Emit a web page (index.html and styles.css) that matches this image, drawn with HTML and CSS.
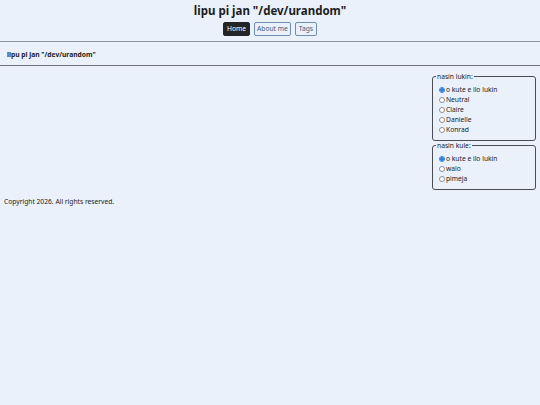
FILE: index.html
```html
<!DOCTYPE html>
<html lang="tok">
<head>
<meta charset="utf-8">
<title>lipu pi jan "/dev/urandom"</title>
<link rel="stylesheet" href="styles.css">
</head>
<body>
<header class="site-header">
  <h1 class="site-title">lipu pi jan "/dev/urandom"</h1>
  <nav class="nav">
    <a class="nav-btn active" href="#">Home</a>
    <a class="nav-btn" href="#">About me</a>
    <a class="nav-btn" href="#">Tags</a>
  </nav>
</header>
<section class="intro">
  <p class="intro-text">lipu pi jan "/dev/urandom"</p>
</section>
<main class="content">
  <aside class="settings">
    <fieldset class="group">
      <legend>nasin lukin:</legend>
      <label class="opt"><input type="radio" name="look" checked>o kute e ilo lukin</label>
      <label class="opt"><input type="radio" name="look">Neutral</label>
      <label class="opt"><input type="radio" name="look">Claire</label>
      <label class="opt"><input type="radio" name="look">Danielle</label>
      <label class="opt"><input type="radio" name="look">Konrad</label>
    </fieldset>
    <fieldset class="group">
      <legend>nasin kule:</legend>
      <label class="opt"><input type="radio" name="color" checked>o kute e ilo lukin</label>
      <label class="opt"><input type="radio" name="color">walo</label>
      <label class="opt"><input type="radio" name="color">pimeja</label>
    </fieldset>
  </aside>
</main>
<footer class="footer">Copyright 2026. All rights reserved.</footer>
</body>
</html>
```

FILE: styles.css
```css
html, body {
  margin: 0;
  padding: 0;
  background: #eaf1fb;
  color: #222222;
  font-family: "Noto Sans", "Open Sans", sans-serif;
  font-size: 6.7px;
}
.site-header {
  text-align: center;
  padding-top: 4px;
  padding-bottom: 5px;
  border-bottom: 1px solid #8e949b;
}
.site-title {
  margin: 0;
  font-size: 11.5px;
  font-weight: 700;
  line-height: 14px;
  color: #1c1c1c;
}
.nav {
  display: flex;
  justify-content: center;
  gap: 4px;
  margin-top: 4px;
}
.nav-btn {
  display: inline-block;
  padding: 2px 2.5px;
  font-size: 6.7px;
  line-height: 8px;
  text-decoration: none;
  color: #3f5d7f;
  border: 1px solid #6f8eb0;
  border-radius: 2px;
}
.nav-btn.active {
  background: #242528;
  color: #ffffff;
  border-color: #242528;
}
.intro {
  border-bottom: 1px solid #6e7379;
  padding: 8px 7px 5px;
}
.intro-text {
  margin: 0;
  font-weight: 700;
  font-size: 6.7px;
  line-height: 10px;
}
.content {
  display: flow-root;
  padding: 6px 4px 0 4px;
}
.settings {
  float: right;
  width: 104px;
  display: flex;
  flex-direction: column;
  gap: 0;
}
.group {
  margin: 0;
  padding: 4px 4px 5px 5px;
  border: 1px solid #4a4d52;
  border-radius: 3px;
  display: flex;
  flex-direction: column;
}
.group legend {
  padding: 0 1px;
  margin-left: -2px;
  font-size: 6.7px;
  line-height: 9px;
}
.opt {
  display: flex;
  align-items: center;
  gap: 1px;
  line-height: 10px;
  font-size: 6.7px;
}
.opt input {
  -webkit-appearance: none;
  appearance: none;
  margin: 0 0 0 1px;
  width: 6px;
  height: 6px;
  box-sizing: border-box;
  border: 1px solid #8b8f94;
  border-radius: 50%;
  background: #ffffff;
}
.opt input:checked {
  border-color: #2f7de1;
  background: radial-gradient(circle, #2f7de1 0 55%, #d6e6fb 65%);
}
.footer {
  padding: 7px 4px;
  font-size: 6.7px;
  line-height: 9px;
}
```
